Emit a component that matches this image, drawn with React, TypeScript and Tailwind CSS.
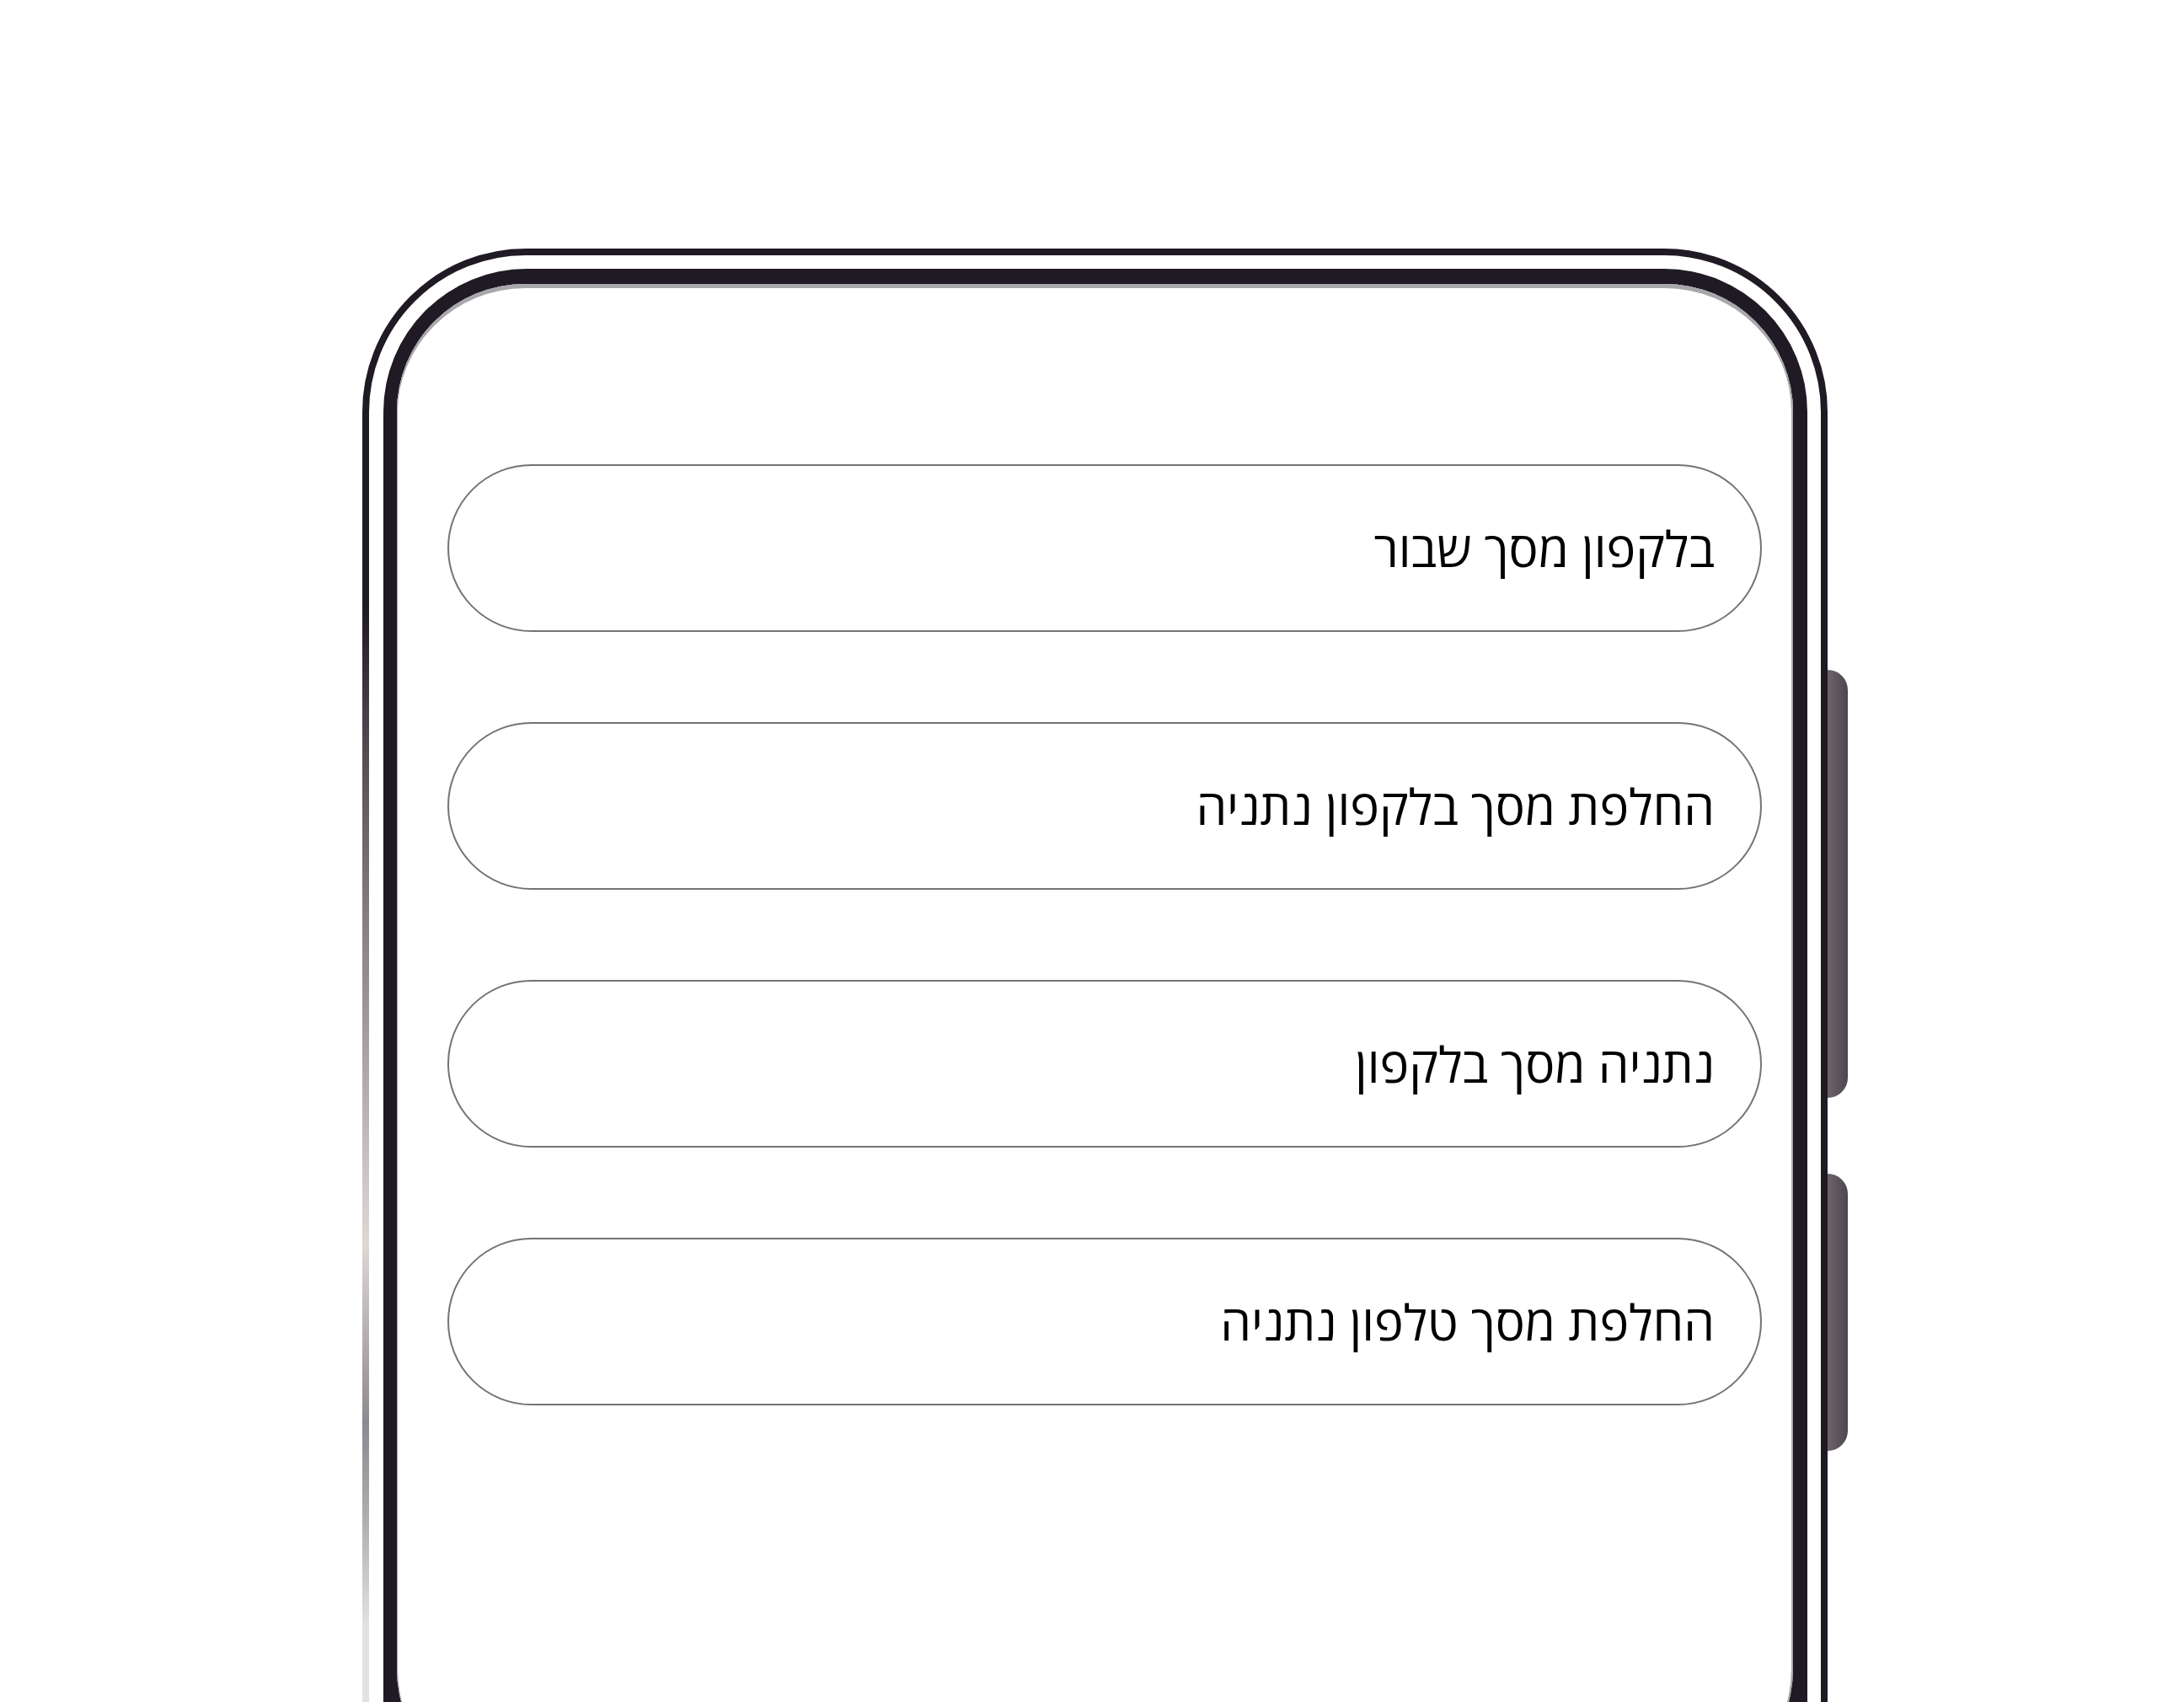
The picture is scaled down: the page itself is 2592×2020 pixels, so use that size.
const items = [
  "בלקפון מסך שבור",
  "החלפת מסך בלקפון נתניה",
  "נתניה מסך בלקפון",
  "החלפת מסך טלפון נתניה",
];

const SearchPill = ({ label }: { label: string }) => (
  <div
    dir="rtl"
    className="h-[199px] w-full rounded-full border-2 border-[#747474] bg-white flex items-center pr-[54px]"
  >
    <span className="text-[58.5px] leading-none text-black font-['Open_Sans','Noto_Sans_Hebrew','DejaVu_Sans',sans-serif]">
      {label}
    </span>
  </div>
);

export default function App() {
  return (
    <div className="w-full h-[2020px] overflow-hidden bg-white pt-[295px] pl-[430px]">
      {/* phone outline */}
      <div className="relative w-[1739px] h-[2100px] border-[8px] border-[#201a24] rounded-t-[194px] pt-[16px] pl-[17px] pr-[16px]">
        {/* faded left edge */}
        <div className="absolute -left-[8px] top-[420px] w-[8px] h-[1420px] [background-image:linear-gradient(to_bottom,#201a24_0%,#5a5058_13%,#8a8088_27%,#ddd8d4_53%,#8e8890_68%,#b0acb0_76%,#e4e2de_85%,#e4e2de_100%)]" />

        {/* side buttons */}
        <div className="absolute -right-[32px] top-[492px] w-[24px] h-[508px] rounded-r-[26px] bg-linear-to-r from-[#6b646a] to-[#4d464e]" />
        <div className="absolute -right-[32px] top-[1090px] w-[24px] h-[329px] rounded-r-[26px] bg-linear-to-r from-[#6b646a] to-[#4d464e]" />

        {/* bezel */}
        <div className="h-full bg-[#201a24] rounded-t-[170px] pt-[18px] pl-[16px] pr-[17px]">
          {/* screen */}
          <div className="h-[1803px] bg-white rounded-t-[152px] rounded-b-[160px] shadow-[inset_0_5px_0_#a8a8ac,inset_1px_0_0_#a8a8ac,inset_-2px_0_0_#a8a8ac] pt-[214px] pl-[60px] pr-[37px]">
            <div className="flex flex-col gap-[107px]">
              {items.map((t) => (
                <SearchPill key={t} label={t} />
              ))}
            </div>
          </div>
        </div>
      </div>
    </div>
  );
}
